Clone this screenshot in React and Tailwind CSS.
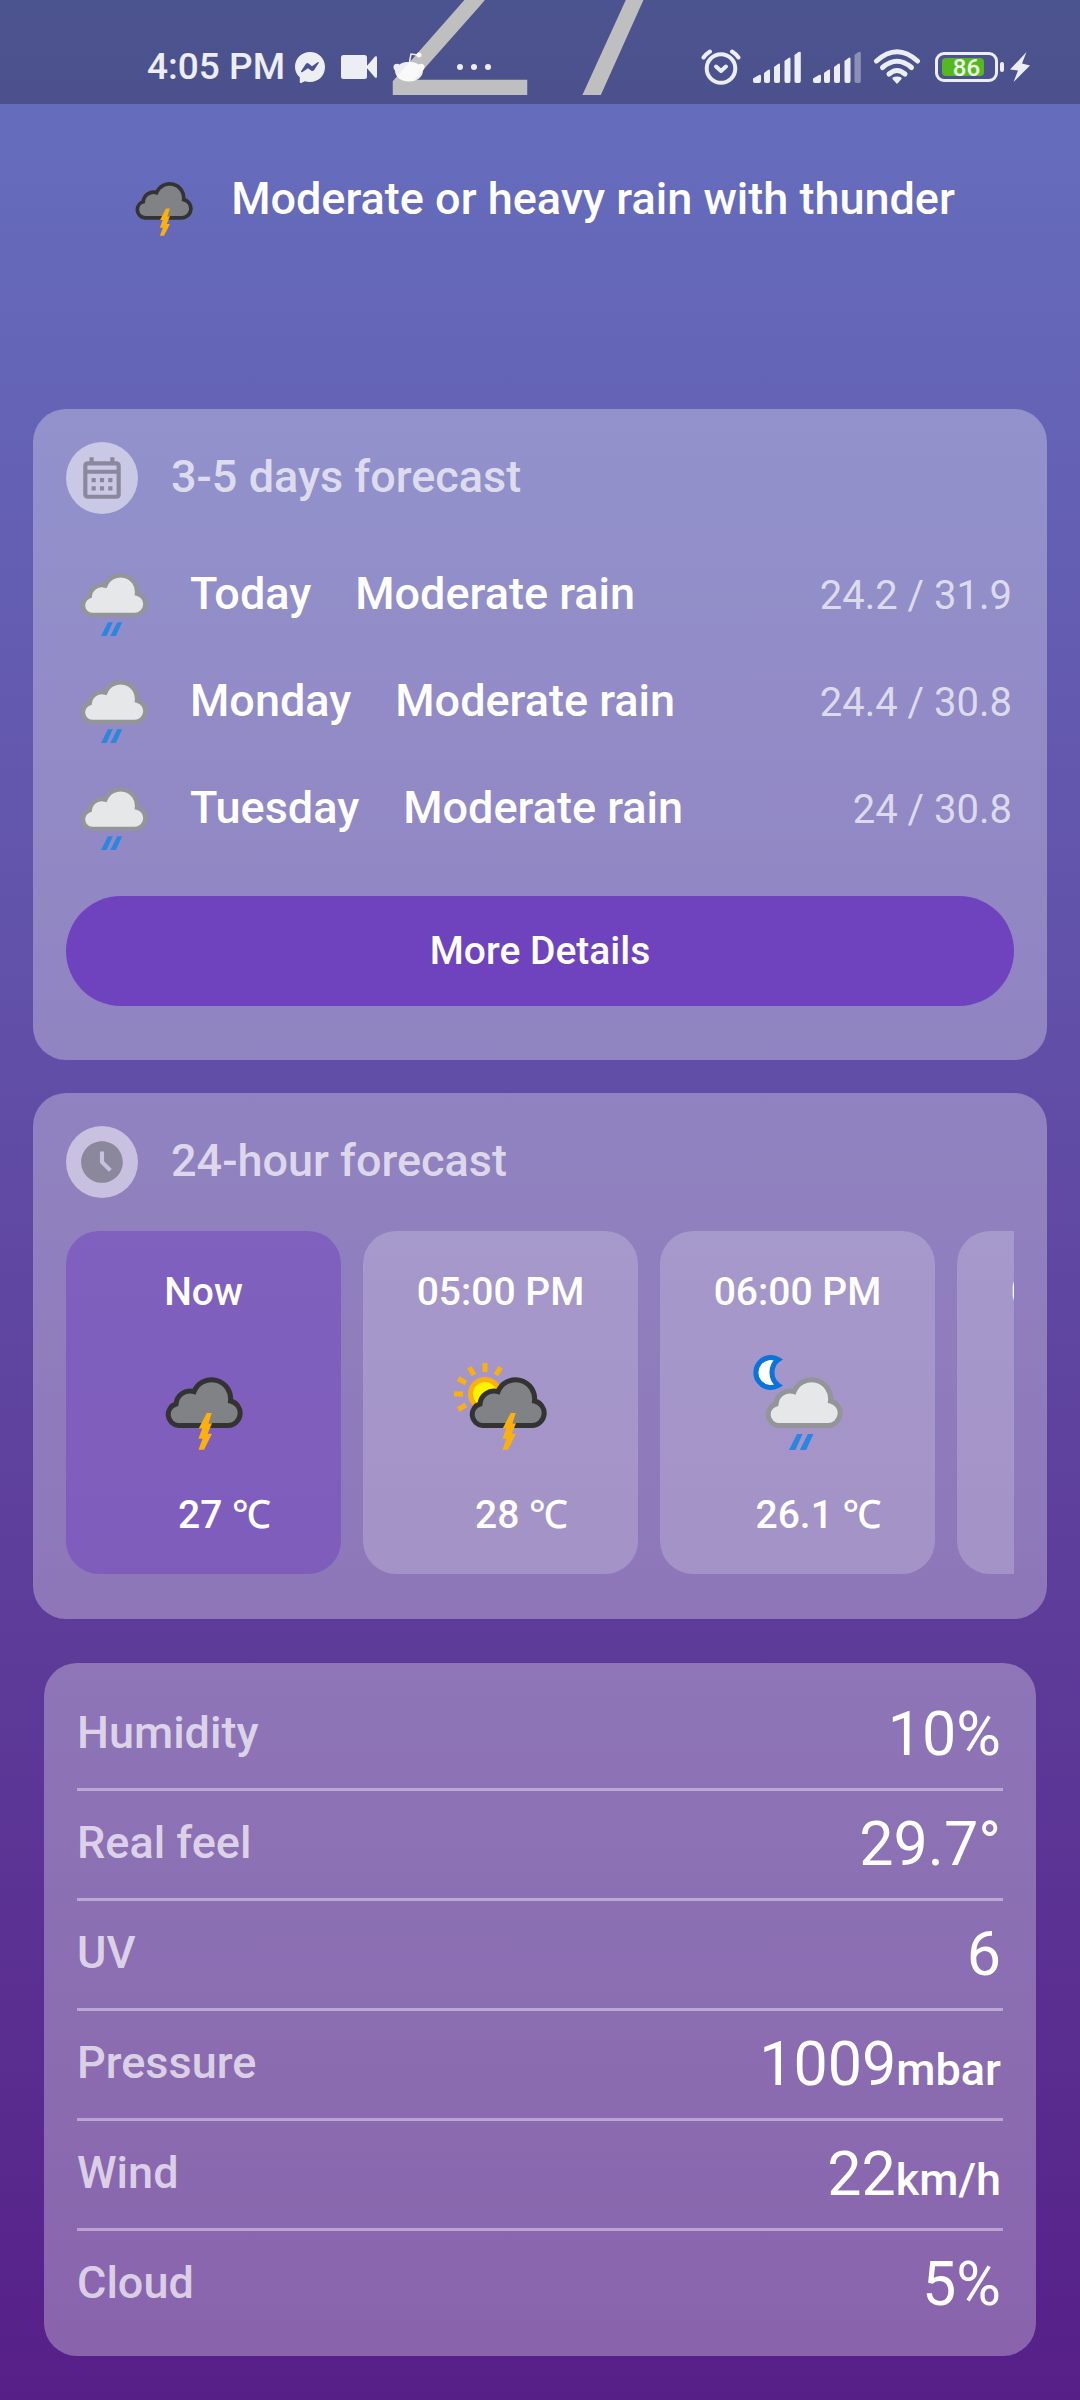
import { MdAccessTimeFilled, MdOutlineCalendarMonth } from "react-icons/md";

const CLOUD =
  "M13.5 49.5 A11 11 0 0 1 11 28 A14 14 0 0 1 29 15.7 A19 19 0 0 1 65.5 25 A12.4 12.4 0 0 1 63 49.5 Z";

function Cloud({ dark }) {
  return (
    <path
      d={CLOUD}
      fill={dark ? "#808285" : "#e6e7e9"}
      stroke={dark ? "#333333" : "#939598"}
      strokeWidth="5"
    />
  );
}

function Bolt() {
  return (
    <path
      d="M41.7 37H46.8L43.5 47.3H47L42.7 57.8H47L39 73.8H33.5L37.5 62.8H33.4L37.2 52.6H33.7Z"
      fill="#fbb010"
    />
  );
}

function Drops() {
  return <path d="M32 58H37.6L30.4 74H24Z M42.8 58H48.4L41.2 74H34.8Z" fill="#2b86e0" />;
}

function Thunder({ className }) {
  return (
    <svg viewBox="0 0 78 74" className={className} aria-hidden="true">
      <Cloud dark />
      <Bolt />
    </svg>
  );
}

function Rain({ className }) {
  return (
    <svg viewBox="0 0 78 74" className={className} aria-hidden="true">
      <Cloud />
      <Drops />
    </svg>
  );
}

function SunThunder({ className }) {
  return (
    <svg viewBox="0 0 93 87" className={className} aria-hidden="true">
      {[-90, -60, -30, 0, 30, -120].map((a) => (
        <rect key={a} x="28.5" y="0" width="5" height="9" fill="#fbb010" transform={`rotate(${a} 31 31)`} />
      ))}
      <circle cx="31" cy="31" r="14.5" fill="#fff200" stroke="#fbb010" strokeWidth="5" />
      <g transform="translate(15 13)">
        <Cloud dark />
        <Bolt />
      </g>
    </svg>
  );
}

function MoonRain({ className }) {
  return (
    <svg viewBox="0 0 90 95" className={className} aria-hidden="true">
      <path
        d="M25.5 4.6A15 15 0 1 0 25.5 30.4A16 16 0 0 1 25.5 4.6Z"
        fill="#ffffff"
        stroke="#0a74da"
        strokeWidth="5"
      />
      <g transform="translate(12 21)">
        <Cloud />
        <Drops />
      </g>
    </svg>
  );
}

function Signal({ weak }) {
  return (
    <svg viewBox="0 0 48 32" className="h-8 w-12" fill="currentColor" aria-hidden="true">
      <path d="M0 27.5L6 24Q8 23.4 8 25V30Q8 32 6 32H2Q0 32 0 30Z" />
      <path d="M11 22L15 19Q17 17.8 17 20V30Q17 32 15 32H13Q11 32 11 30Z" />
      <path d="M21 16L25 13Q27 11.8 27 14V30Q27 32 25 32H23Q21 32 21 30Z" />
      <path d="M31.5 10L35.5 7Q37.5 5.8 37.5 8V30Q37.5 32 35.5 32H33.5Q31.5 32 31.5 30Z" />
      <path d="M41.5 4L45.5 1Q47.8 0 47.8 2V30Q47.8 32 45.8 32H43.5Q41.5 32 41.5 30Z" opacity={weak ? 0.4 : 1} />
    </svg>
  );
}

function StatusBar() {
  return (
    <div className="absolute inset-x-0 top-0 flex h-[104px] items-center justify-between bg-black/25 pt-[30px] pr-[50px] pl-[147px] text-white/90">
      <div className="flex items-center">
        <span className="mr-2.5 text-[37px] leading-[44px] font-medium">4:05 PM</span>
        <svg viewBox="0 0 30 31" className="mr-4 h-[31px] w-[30px]" aria-hidden="true">
          <path
            fillRule="evenodd"
            fill="currentColor"
            d="M15 0C6.500 0 0 6.400 0 14.800C0 19.200 1.800 22.800 4.800 25.300V30.200Q5 31.300 6.200 30.900L9.800 29.200C11.400 29.700 13.200 29.900 15 29.900C23.500 29.900 30 23.500 30 14.900S23.500 0 15 0ZM6 19.300L10.800 12Q12 10.500 13.600 11.500L17 14.200L22.600 10.300Q24.300 9.600 23.700 11.100L19 18.300Q17.800 19.700 16.300 18.700L13 16.200L7.500 20.100Q5.800 20.900 6 19.300Z"
          />
        </svg>
        <svg viewBox="0 0 36 24" className="mr-4 h-6 w-9" fill="currentColor" aria-hidden="true">
          <rect width="26" height="24" rx="2.500" />
          <path d="M25 12L34 1.500Q36 0.500 36 2.500V21.500Q36 23.500 34 22.500Z" />
        </svg>
        <svg viewBox="0 0 32 30" className="mr-8 h-[30px] w-8" aria-hidden="true">
          <path
            fill="currentColor"
            d="M16 10C20 10 23 10.500 25.500 12.500C28 11 31.500 12 31.500 15C31.500 17 30.500 18 30 18.500C30 25 24 29.500 16 29.500S2 25 2 18.500C1.500 18 0.500 17 0.500 15C0.500 12 4 11 6.500 12.500C9 10.500 12 10 16 10Z"
          />
          <circle cx="26" cy="3" r="2.500" fill="currentColor" />
          <path d="M16.500 10L18 2L25 3" fill="none" stroke="currentColor" strokeWidth="1.500" />
        </svg>
        <svg viewBox="0 0 34 6" className="h-1.5 w-[34px]" fill="currentColor" aria-hidden="true">
          <circle cx="3" cy="3" r="3" />
          <circle cx="17" cy="3" r="3" />
          <circle cx="31" cy="3" r="3" />
        </svg>
      </div>
      <div className="flex items-center">
        <svg
          viewBox="0 0 40 36"
          className="mr-3 h-9 w-10"
          fill="none"
          stroke="currentColor"
          strokeWidth="4"
          strokeLinecap="round"
          strokeLinejoin="round"
          aria-hidden="true"
        >
          <circle cx="20" cy="19.500" r="14.300" />
          <path d="M15 17.500L20 22L25 17.500" />
          <path d="M2.500 8.500Q5 5 9 2.500M37.500 8.500Q35 5 31 2.500" />
        </svg>
        <div className="mr-3">
          <Signal />
        </div>
        <div className="mr-3">
          <Signal weak />
        </div>
        <svg
          viewBox="0 0 48 36"
          className="mr-3.5 h-9 w-12"
          fill="none"
          stroke="currentColor"
          strokeWidth="5"
          strokeLinecap="round"
          aria-hidden="true"
        >
          <path d="M3.500 12Q24 -6.500 44.500 12" />
          <path d="M9.500 18.500Q24 6 38.500 18.500" />
          <path d="M16 25Q24 18 32 25" />
          <path d="M24 27.500Q29.500 27.500 28.500 30L24 35L19.500 30Q18.500 27.500 24 27.500Z" fill="currentColor" stroke="none" />
        </svg>
        <div className="relative flex h-[30px] w-[63px] items-center rounded-[9px] border-3 border-current p-1">
          <span className="h-[18px] w-[42px] rounded-sm bg-[#54b820]" />
          <span className="absolute inset-0 flex items-center justify-center pt-0.5 text-[24px] leading-6 font-medium">
            86
          </span>
        </div>
        <span className="mr-1.5 ml-0.5 h-2.5 w-1 rounded-sm bg-current" />
        <svg viewBox="0 0 20 30" className="h-[30px] w-5" fill="currentColor" aria-hidden="true">
          <path d="M16.500 0L0 17.500L8 18.500L3.500 30L20 13.500L12 11.500Z" />
        </svg>
      </div>
    </div>
  );
}

function SectionTitle({ icon: Icon, children }) {
  return (
    <div className="flex items-center gap-[33px]">
      <span className="flex size-[72px] items-center justify-center rounded-full bg-white/50 text-[#8b879d]">
        <Icon className="size-[50px]" aria-hidden="true" />
      </span>
      <h2 className="pb-0.5 text-[45px] leading-[52px] font-medium text-white/70">{children}</h2>
    </div>
  );
}

const days = [
  { day: "Today", text: "Moderate rain", range: "24.2 / 31.9" },
  { day: "Monday", text: "Moderate rain", range: "24.4 / 30.8" },
  { day: "Tuesday", text: "Moderate rain", range: "24 / 30.8" },
];

const hours = [
  { time: "Now", temp: "27 ℃", icon: <Thunder className="h-[74px] w-[78px]" />, now: true },
  { time: "05:00 PM", temp: "28 ℃", icon: <SunThunder className="h-[87px] w-[93px]" /> },
  { time: "06:00 PM", temp: "26.1 ℃", icon: <MoonRain className="h-[95px] w-[90px]" /> },
  { time: "07:00 PM", temp: "25.6 ℃", icon: <MoonRain className="h-[95px] w-[90px]" /> },
];

const details = [
  { label: "Humidity", value: "10%" },
  { label: "Real feel", value: "29.7°" },
  { label: "UV", value: "6" },
  { label: "Pressure", value: "1009", unit: "mbar" },
  { label: "Wind", value: "22", unit: "km/h" },
  { label: "Cloud", value: "5%" },
];

export default function App() {
  return (
    <div className="relative min-h-screen bg-linear-to-b from-[#6670bf] to-[#561f88] pb-11 font-[Roboto,'Noto_Sans',sans-serif] text-white">
      <main>
        <div className="flex h-[104px] items-end justify-center overflow-hidden">
          <p className="text-[302px] leading-[223px] font-light">27</p>
        </div>

        <div className="flex items-start justify-center gap-[38px] pt-[69px] pb-[173px]">
          <div className="flex w-[68px] justify-end pt-2">
            <Thunder className="h-[55px] w-[58px]" />
          </div>
          <h1 className="text-[45px] leading-[52px] font-medium">Moderate or heavy rain with thunder</h1>
        </div>

        <section className="mx-[33px] rounded-[33px] bg-white/30 px-[33px] pt-[33px] pb-[54px]">
          <SectionTitle icon={MdOutlineCalendarMonth}>3-5 days forecast</SectionTitle>
          <ul className="mt-[54px] flex flex-col gap-[39px]">
            {days.map((d) => (
              <li key={d.day} className="flex items-start gap-[42px] pl-3.5">
                <div className="pt-1">
                  <Rain className="h-16 w-[68px]" />
                </div>
                <div className="flex flex-1 items-baseline text-[45px] leading-[52px] font-medium">
                  <span className="mr-11">{d.day}</span>
                  <span>{d.text}</span>
                  <span className="ml-auto pr-0.5 text-[40px] font-normal text-white/70">{d.range}</span>
                </div>
              </li>
            ))}
          </ul>
          <button
            type="button"
            className="mt-[46px] h-[110px] w-full rounded-full bg-[#6f42be] text-[39px] leading-12 font-medium"
          >
            More Details
          </button>
        </section>

        <section className="mx-[33px] mt-[33px] rounded-[33px] bg-white/30 px-[33px] pt-[33px] pb-[45px]">
          <SectionTitle icon={MdAccessTimeFilled}>24-hour forecast</SectionTitle>
          <ul className="mt-[33px] flex gap-[22px] overflow-hidden">
            {hours.map((h) => (
              <li
                key={h.time}
                className={`flex w-[275px] shrink-0 flex-col items-center rounded-[33px] pt-[37px] pb-[35px] text-[39px] leading-12 font-medium ${
                  h.now ? "bg-[#6f42be]/50" : "bg-white/20"
                }`}
              >
                <span>{h.time}</span>
                <div className="flex h-[134px] items-end">{h.icon}</div>
                <span className="mt-[41px] pl-[42px]">{h.temp}</span>
              </li>
            ))}
          </ul>
        </section>

        <dl className="mx-11 mt-11 rounded-[33px] bg-white/30 px-[33px] pt-[18px] pb-[15px]">
          {details.map((d) => (
            <div
              key={d.label}
              className="flex h-[110px] items-center justify-between border-b-3 border-white/40 last:border-transparent"
            >
              <dt className="pb-1 text-[45px] leading-[52px] font-medium text-white/70">{d.label}</dt>
              <dd className="pr-0.5 pb-0.5 text-[61px] leading-[72px]">
                {d.value}
                {d.unit && <span className="text-[45px] leading-none font-medium">{d.unit}</span>}
              </dd>
            </div>
          ))}
        </dl>
      </main>
      <StatusBar />
    </div>
  );
}
